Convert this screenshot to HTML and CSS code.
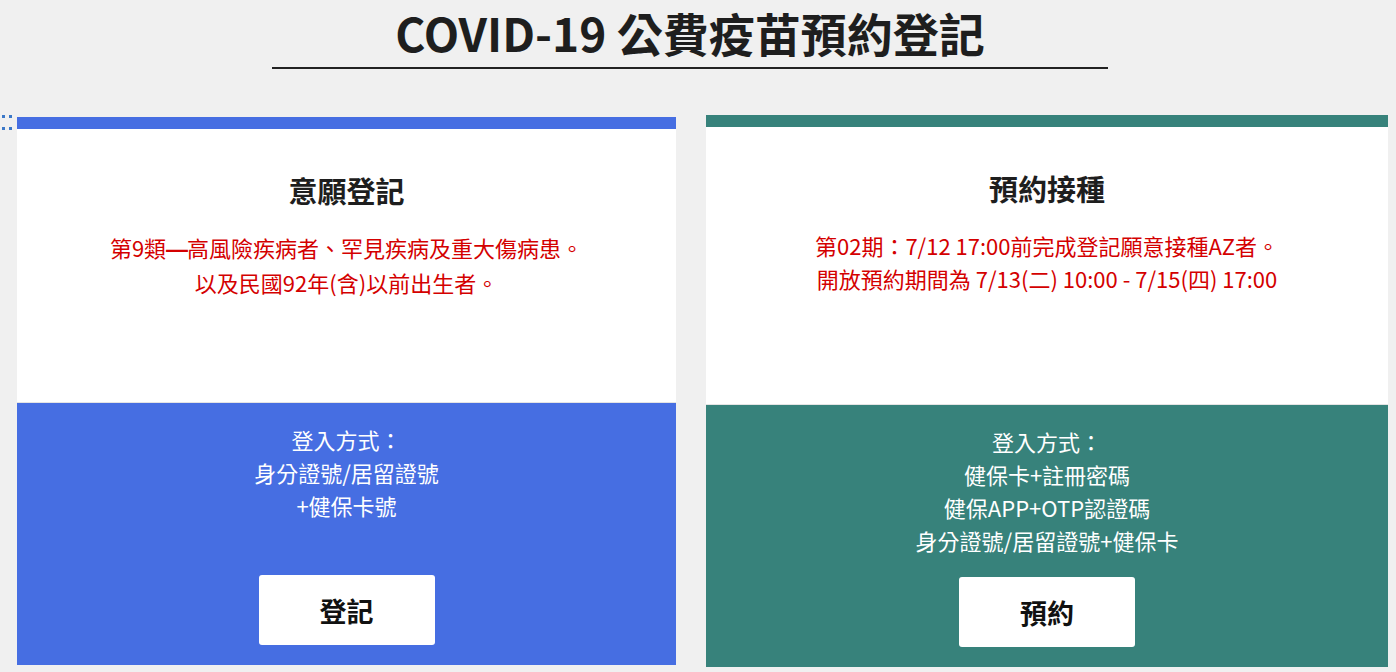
FILE: index.html
```html
<!DOCTYPE html>
<html lang="zh-Hant">

<head>
    <meta charset="UTF-8">
    <meta name="viewport" content="width=device-width, initial-scale=1.0">
    <title>COVID-19 公費疫苗預約登記</title>
    <link rel="stylesheet" href="styles.css">
</head>

<body>

    <header class="page-head">
        <h1>COVID-19 公費疫苗預約登記</h1>
    </header>

    <main class="cards">
        <div class="grip">
            <span></span><span></span><span></span><span></span>
        </div>

        <section class="card card-blue">
            <div class="card-top">
                <h2>意願登記</h2>
                <p class="notice">第9類<span class="dash">—</span>高風險疾病者、罕見疾病及重大傷病患。<br>以及民國92年(含)以前出生者。</p>
            </div>
            <div class="card-bottom">
                <p class="login">登入方式：<br>身分證號/居留證號<br>+健保卡號</p>
                <button class="action">登記</button>
            </div>
        </section>

        <section class="card card-green">
            <div class="card-top">
                <h2>預約接種</h2>
                <p class="notice">第02期：7/12 17:00前完成登記願意接種AZ者。<br>開放預約期間為 7/13(二) 10:00 - 7/15(四) 17:00</p>
            </div>
            <div class="card-bottom">
                <p class="login">登入方式：<br>健保卡+註冊密碼<br>健保APP+OTP認證碼<br>身分證號/居留證號+健保卡</p>
                <button class="action">預約</button>
            </div>
        </section>
    </main>

</body>

</html>
```

FILE: styles.css
```css
body {
    margin: 0;
    background-color: #f0f0f0;
    font-family: "Noto Sans CJK TC", "Noto Sans", sans-serif;
    color: #1e1e1e;
}

.page-head {
    padding-right: 16px;
}

.page-head h1 {
    width: 836px;
    margin: 0 auto;
    padding: 4px 0 6px;
    font-size: 46px;
    line-height: 57px;
    font-weight: bold;
    text-align: center;
    border-bottom: 2px solid #222;
}

.cards {
    display: flex;
    align-items: flex-start;
    margin-top: 46px;
}

/* 左側拖曳把手 */
.grip {
    width: 17px;
    display: grid;
    grid-template-columns: 3px 3px;
    column-gap: 4px;
    row-gap: 9px;
    padding: 0 0 0 2px;
    box-sizing: border-box;
}

.grip span {
    width: 3px;
    height: 3px;
    background-color: #3b78c8;
}

.card {
    display: flex;
    flex-direction: column;
    background-color: #fff;
    border-top: 12px solid;
}

.card-blue {
    width: 659px;
    margin-top: 2px;
    margin-right: 30px;
    border-color: #466ee2;
}

.card-green {
    width: 682px;
    border-color: #37827b;
}

.card-top {
    text-align: center;
    padding-top: 42px;
}

.card-blue .card-top {
    height: 231px;
}

.card-green .card-top {
    height: 235px;
}

.card-top h2 {
    margin: 0;
    font-size: 29px;
    line-height: 38px;
    font-weight: bold;
}

.notice {
    margin: 22px 0 0;
    font-size: 22px;
    line-height: 33px;
    color: #d40000;
}

/* 破折號用 Liberation Sans 畫成較粗的長線 */
.dash {
    font-family: "Liberation Sans", sans-serif;
    font-weight: bold;
    letter-spacing: -1px;
}

.card-bottom {
    height: 263px;
    box-sizing: border-box;
    padding: 20px 0 20px;
    display: flex;
    flex-direction: column;
    align-items: center;
    justify-content: space-between;
    border-top: 1px solid #e4e4e4;
}

.card-blue .card-bottom {
    background-color: #466ee2;
}

.card-green .card-bottom {
    background-color: #37827b;
}

.login {
    margin: 0;
    font-size: 22px;
    line-height: 33px;
    color: #fff;
    text-align: center;
}

.action {
    width: 176px;
    height: 70px;
    background-color: #fff;
    color: #111;
    font-family: inherit;
    font-size: 27px;
    font-weight: bold;
    border: none;
    border-radius: 3px;
    cursor: pointer;
}

.action:hover {
    background-color: #f4f4f4;
}
```
